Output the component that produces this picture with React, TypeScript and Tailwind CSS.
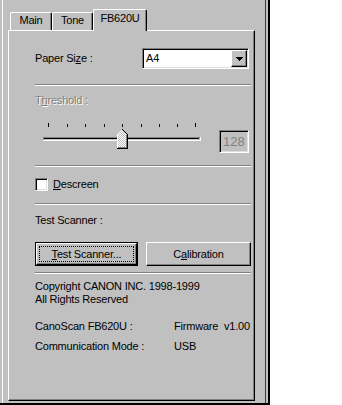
import React from 'react';

const FONT = "font-['Liberation_Sans',Arial,sans-serif]";

function Sep() {
  return <div className="w-[216px] h-[2px] border-t border-t-[#808080] border-b border-b-white" />;
}

function Tab({ label, width, active }: { label: string; width: string; active?: boolean }) {
  return (
    <div
      className={
        active
          ? `${width} h-[22px] -mb-px relative z-10 bg-[#c0c0c0] pt-[2px] text-center border-t border-l border-white border-r border-r-black shadow-[inset_-1px_0_0_#808080] rounded-tl-[2px] rounded-tr-[2px]`
          : `${width} h-[18px] pt-[1px] text-center border-t border-l border-white border-r border-r-black shadow-[inset_-1px_0_0_#808080] rounded-tl-[2px] rounded-tr-[2px]`
      }
    >
      {label}
    </div>
  );
}

function Slider() {
  const ticks = [13, 32, 50, 69, 87, 106, 124, 142, 160];
  return (
    <svg width="184" height="33" shapeRendering="crispEdges" className="block">
      <defs>
        <pattern id="dith" width="2" height="2" patternUnits="userSpaceOnUse">
          <rect width="2" height="2" fill="#c0c0c0" />
          <rect width="1" height="1" fill="#ffffff" />
          <rect x="1" y="1" width="1" height="1" fill="#ffffff" />
        </pattern>
      </defs>
      {ticks.map((x, i) => {
        const end = i === 0 || i === ticks.length - 1;
        return <rect key={x} x={x} y={end ? 3 : 4} width="1" height={end ? 4 : 3} fill="#000" />;
      })}
      {/* track */}
      <rect x="8" y="17" width="157" height="1" fill="#808080" />
      <rect x="8" y="17" width="1" height="3" fill="#808080" />
      <rect x="9" y="18" width="155" height="1" fill="#000" />
      <rect x="8" y="20" width="158" height="1" fill="#fff" />
      <rect x="165" y="17" width="1" height="4" fill="#fff" />
      {/* thumb */}
      <path d="M82 14 L87 9 L92 14 L92 28 L82 28 Z" fill="url(#dith)" />
      <path d="M82.5 28 V14.5 L87.5 9.5" stroke="#fff" fill="none" />
      <path d="M87.5 9.5 L92.5 14.5 V28.5 H82" stroke="#000" fill="none" />
      <path d="M91.5 14.5 V27.5 H83" stroke="#808080" fill="none" />
    </svg>
  );
}

function Raised({ children, className }: { children: React.ReactNode; className?: string }) {
  return (
    <div
      className={`flex items-center justify-center border-t border-l border-white border-r border-b border-r-black border-b-black shadow-[inset_-1px_-1px_0_#808080] bg-[#c0c0c0] ${className ?? ''}`}
    >
      {children}
    </div>
  );
}

export default function App() {
  return (
    <div className={`w-[342px] h-[405px] bg-white flex text-[11px] leading-[13px] tracking-[-0.2px] text-black ${FONT}`}>
      <div className="w-[270px] h-[405px] bg-[#c0c0c0] border-r-2 border-b-2 border-black px-[2px] flex">
        <div className="w-[264px] h-full border-l border-white border-r border-r-[#404040] flex flex-col">
          {/* tabs */}
          <div className="flex items-end h-[21px] mt-[9px] pl-[7px]">
            <Tab label="Main" width="w-[42px]" />
            <Tab label="Tone" width="w-[41px]" />
            <Tab label="FB620U" width="w-[54px]" active />
          </div>

          {/* panel */}
          <div className="ml-[5px] w-[247px] h-[371px] border-t border-l border-white border-r border-b border-r-black border-b-black shadow-[inset_-1px_-1px_0_#808080] pl-[26px] flex flex-col">
            <div className="mt-[17px] h-[21px] flex items-center">
              <div className="w-[107px]">
                Paper Si<u>z</u>e :
              </div>
              <div className="w-[107px] h-[21px] border-t border-l border-t-[#808080] border-l-[#808080] border-r border-b border-white shadow-[inset_1px_1px_0_#000,inset_-1px_-1px_0_#dfdfdf] bg-white flex p-[1px]">
                <div className="flex-1 pl-[2px] flex items-center">A4</div>
                <Raised className="w-[16px] h-[17px]">
                  <svg width="7" height="4" shapeRendering="crispEdges" className="block">
                    <rect x="0" y="0" width="7" height="1" fill="#000" />
                    <rect x="1" y="1" width="5" height="1" fill="#000" />
                    <rect x="2" y="2" width="3" height="1" fill="#000" />
                    <rect x="3" y="3" width="1" height="1" fill="#000" />
                  </svg>
                </Raised>
              </div>
            </div>

            <div className="mt-[15px]">
              <Sep />
            </div>

            <div className="mt-[8px] h-[13px] text-[#808080] [text-shadow:1px_1px_0_#fff]">
              T<u>h</u>reshold :
            </div>

            <div className="mt-[13px] h-[33px] flex items-start">
              <Slider />
              <div className="mt-[10px] w-[30px] h-[23px] border-t border-l border-t-[#808080] border-l-[#808080] border-r border-b border-white shadow-[inset_1px_1px_0_#000,inset_-1px_-1px_0_#dfdfdf] text-[#808080] text-[13px] leading-[19px] tracking-normal pl-[3px] pt-[1px]">
                128
              </div>
            </div>

            <div className="mt-[12px]">
              <Sep />
            </div>

            <div className="mt-[11px] h-[13px] flex items-center">
              <div className="w-[13px] h-[13px] bg-white border-t border-l border-t-[#808080] border-l-[#808080] border-r border-b border-white shadow-[inset_1px_1px_0_#000,inset_-1px_-1px_0_#dfdfdf]" />
              <span className="ml-[5px]">
                <u>D</u>escreen
              </span>
            </div>

            <div className="mt-[12px]">
              <Sep />
            </div>

            <div className="mt-[9px] h-[13px]">Test Scanner :</div>

            <div className="mt-[15px] flex gap-[8px]">
              <div className="w-[103px] h-[24px] border border-black flex">
                <Raised className="flex-1 p-[2px]">
                  <div className="w-full h-full border border-dotted border-black flex items-center justify-center">
                    <span>
                      <u>T</u>est Scanner...
                    </span>
                  </div>
                </Raised>
              </div>
              <Raised className="w-[105px] h-[24px]">
                <span>
                  C<u>a</u>libration
                </span>
              </Raised>
            </div>

            <div className="mt-[6px]">
              <Sep />
            </div>

            <div className="mt-[6px]">
              <div>Copyright CANON INC. 1998-1999</div>
              <div>All Rights Reserved</div>
            </div>

            <div className="mt-[14px] flex">
              <div className="w-[139px]">CanoScan FB620U :</div>
              <div>Firmware&nbsp;&nbsp;v1.00</div>
            </div>
            <div className="mt-[7px] flex">
              <div className="w-[139px]">Communication Mode :</div>
              <div>USB</div>
            </div>
          </div>
        </div>
      </div>
    </div>
  );
}
